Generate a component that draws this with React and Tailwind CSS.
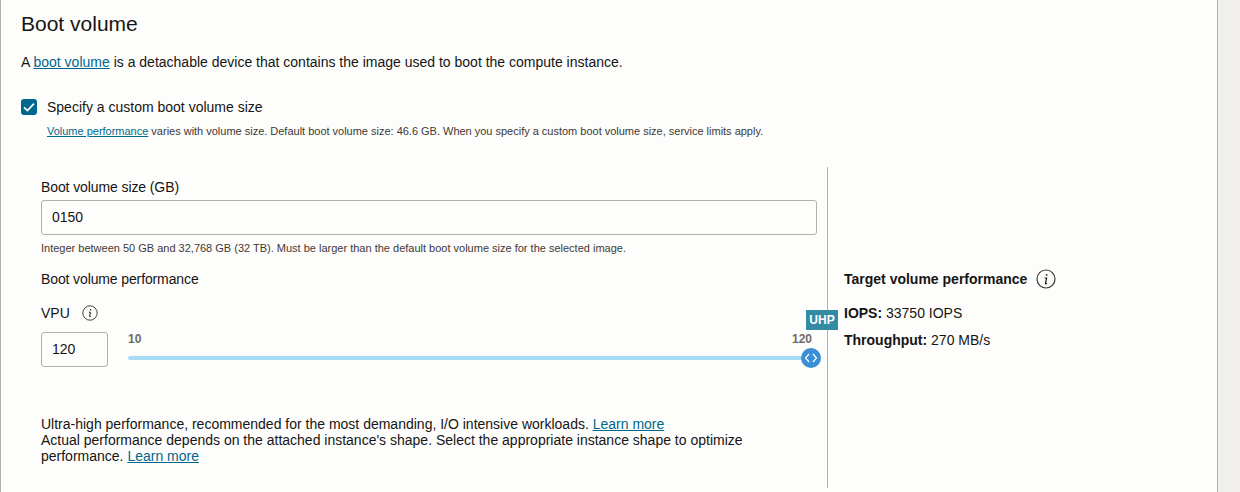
import React from 'react';

const LINK = 'text-[#00688c] underline';

const InfoIcon = ({ size = 16 }) => (
  <svg viewBox="0 0 20 20" width={size} height={size} fill="none" className="shrink-0">
    <circle cx="10" cy="10" r="9" stroke="#3d3935" strokeWidth="1.2" />
    <path d="M10.6 5.2v1.5" stroke="#161513" strokeWidth="1.6" />
    <path d="M8.6 9h2l-1.1 5.2c-.1.5.2.7.6.5l.9-.5" stroke="#161513" strokeWidth="1.2" />
  </svg>
);

const SliderThumb = () => (
  <div className="absolute right-[-5px] top-[-8px] flex h-5 w-5 items-center justify-center rounded-full bg-[#3a8fd6]">
    <svg viewBox="0 0 20 20" width="20" height="20" fill="none" stroke="#fff" strokeWidth="1.2">
      <path d="M8 6 4.5 10 8 14" />
      <path d="M12 6 15.5 10 12 14" />
    </svg>
  </div>
);

export default function App() {
  return (
    <div className="flex h-[492px] w-[1240px] overflow-hidden bg-[#f1efed] text-[14px] leading-[16px] text-[#161513] font-['Liberation_Sans',Arial,sans-serif]">
      <main className="h-full w-[1218px] border-x border-[#b3afaa] bg-[#fdfdfc] pl-5">
        <h2 className="mt-[12px] text-[21px] leading-[24px]">Boot volume</h2>
        <p className="mt-[18px]">
          A <a className={LINK}>boot volume</a> is a detachable device that contains the image used to boot the compute instance.
        </p>

        <div className="mt-[29px] flex items-center gap-[10px]">
          <div className="flex h-4 w-4 items-center justify-center rounded-[3px] bg-[#00688c]">
            <svg viewBox="0 0 16 16" width="16" height="16" fill="none" stroke="#fff" strokeWidth="1.7">
              <path d="M3 8.4 6.4 11.6 13 4.6" />
            </svg>
          </div>
          <span>Specify a custom boot volume size</span>
        </div>
        <p className="mt-[10px] ml-[26px] text-[11px] leading-[12px] tracking-[-0.01px] text-[#3d3935]">
          <a className={LINK}>Volume performance</a> varies with volume size. Default boot volume size: 46.6 GB. When you specify a custom boot volume size, service limits apply.
        </p>

        <div className="mt-[30px] flex h-[321px]">
          <section className="w-[807px] shrink-0 border-r border-[#b3afaa] pl-5 pr-[10px]">
            <label className="mt-[12px] block tracking-[-0.1px]">Boot volume size (GB)</label>
            <div className="mt-[5px] flex h-[35px] w-[776px] items-center rounded-[3px] border border-[#b3afaa] px-[10px] pb-[2px]">0150</div>
            <p className="mt-[7px] text-[11px] leading-[12px] text-[#3d3935]">
              Integer between 50 GB and 32,768 GB (32 TB). Must be larger than the default boot volume size for the selected image.
            </p>
            <p className="mt-[17px] tracking-[-0.12px]">Boot volume performance</p>

            <div className="mt-[18px] flex items-center gap-[12px]">
              <span>VPU</span>
              <InfoIcon />
            </div>

            <div className="mt-[11px] flex gap-[20px]">
              <div className="flex h-[35px] w-[67px] items-center rounded-[3px] border border-[#b3afaa] px-[10px] pb-[2px]">120</div>
              <div className="w-[688px]">
                <div className="flex justify-between pr-[4px] text-[12px] leading-[14px] font-bold text-[#6f6b66]">
                  <span>10</span>
                  <span>120</span>
                </div>
                <div className="relative mt-[10px] h-1 rounded-full bg-[#a7dcf7]">
                  <SliderThumb />
                </div>
              </div>
            </div>

            <div className="mt-[49px] w-[776px]">
              <p>
                Ultra-high performance, recommended for the most demanding, I/O intensive workloads. <a className={LINK}>Learn more</a>
              </p>
              <p>
                Actual performance depends on the attached instance's shape. Select the appropriate instance shape to optimize performance. <a className={LINK}>Learn more</a>
              </p>
            </div>
          </section>

          <aside className="relative pl-[16px]">
            <div className="mt-[102px] flex items-center gap-[9px]">
              <span className="font-bold">Target volume performance</span>
              <InfoIcon size={20} />
            </div>
            <p className="mt-[16px]"><b>IOPS:</b> 33750 IOPS</p>
            <p className="mt-[11px]"><b>Throughput:</b> 270 MB/s</p>
            <div className="absolute left-[-22px] top-[143px] flex h-5 w-8 items-center justify-center bg-[#338aa3] text-[12px] font-bold text-white">UHP</div>
          </aside>
        </div>
      </main>
    </div>
  );
}
